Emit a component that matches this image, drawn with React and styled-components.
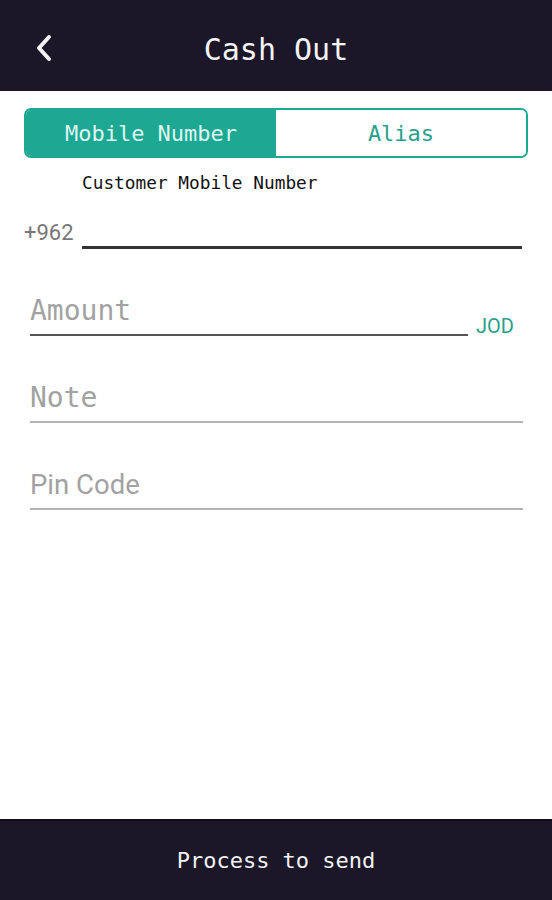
import { useState } from 'react';
import styled, { createGlobalStyle } from 'styled-components';

const GlobalStyle = createGlobalStyle`
  html, body {
    margin: 0;
    padding: 0;
    background: #fff;
  }
  * {
    box-sizing: border-box;
  }
`;

const mono = `"DejaVu Sans Mono", "Liberation Mono", monospace`;
const sans = `Roboto, "Noto Sans", sans-serif`;
const teal = '#1ca893';
const navy = '#1b1729';

const Screen = styled.div`
  display: flex;
  flex-direction: column;
  height: 900px;
  background: #fff;
`;

const Header = styled.header`
  position: relative;
  display: flex;
  align-items: center;
  justify-content: center;
  height: 91px;
  padding-top: 7px;
  background: ${navy};
`;

const BackButton = styled.button`
  position: absolute;
  left: 28px;
  top: 30px;
  display: flex;
  align-items: center;
  justify-content: center;
  width: 32px;
  height: 36px;
  padding: 0;
  border: 0;
  background: none;
  cursor: pointer;
`;

const Title = styled.h1`
  margin: 0;
  font-family: ${mono};
  font-size: 30px;
  font-weight: normal;
  color: #f4f4f4;
`;

const Content = styled.main`
  flex: 1;
  padding: 17px 24px 0 24px;
`;

const Toggle = styled.div`
  display: flex;
  height: 50px;
  border: 2px solid ${teal};
  border-radius: 7px;
  overflow: hidden;
`;

const ToggleOption = styled.button`
  flex: 1;
  border: 0;
  padding: 0;
  font-family: ${mono};
  font-size: 22px;
  background: ${(p) => (p.$active ? teal : '#fff')};
  color: ${(p) => (p.$active ? '#dff5f0' : '#27a08c')};
  cursor: pointer;
`;

const FieldLabel = styled.div`
  margin: 14px 0 0 58px;
  font-family: ${mono};
  font-size: 17.8px;
  color: #111;
`;

const PhoneRow = styled.div`
  display: flex;
  align-items: flex-end;
  margin-top: 24px;
  padding-right: 6px;
`;

const Prefix = styled.span`
  width: 58px;
  font-family: ${sans};
  font-size: 22px;
  line-height: 24px;
  color: #777;
  padding-bottom: 4px;
`;

const PhoneInput = styled.input`
  flex: 1;
  height: 32px;
  border: 0;
  border-bottom: 3px solid #333;
  outline: none;
  font-family: ${mono};
  font-size: 22px;
  background: transparent;
`;

const Field = styled.div`
  display: flex;
  align-items: flex-end;
  margin-top: ${(p) => p.$gap}px;
  padding: 0 ${(p) => (p.$suffix ? 14 : 5)}px 0 6px;
`;

const TextInput = styled.input`
  flex: 1;
  min-width: 0;
  height: 44px;
  padding: 0 0 6px 0;
  border: 0;
  border-bottom: 2px solid ${(p) => (p.$focused ? '#555' : '#b3b3b3')};
  outline: none;
  font-family: ${(p) => (p.$sans ? sans : mono)};
  font-size: ${(p) => (p.$sans ? 27.5 : 28)}px;
  background: transparent;
  color: #222;

  &::placeholder {
    color: #a2a2a2;
  }
`;

const Suffix = styled.span`
  margin-left: 8px;
  font-family: ${sans};
  font-size: 20px;
  line-height: 20px;
  color: #2a9f89;
`;

const Footer = styled.button`
  height: 81px;
  padding-top: 0;
  border: 0;
  border-top: 2px solid #0f0c1a;
  background: ${navy};
  color: #f2f2f2;
  font-family: ${mono};
  font-size: 22px;
  cursor: pointer;
`;

const App = () => {
  const [mode, setMode] = useState('mobile');

  return (
    <>
      <GlobalStyle />
      <Screen>
        <Header>
          <BackButton aria-label="Back">
            <svg width="20" height="28" viewBox="0 0 20 28" fill="none">
              <path
                d="M15 3 L5 14 L15 25"
                stroke="#f4f4f4"
                strokeWidth="4"
                strokeLinecap="round"
                strokeLinejoin="round"
              />
            </svg>
          </BackButton>
          <Title>Cash Out</Title>
        </Header>
        <Content>
          <Toggle>
            <ToggleOption $active={mode === 'mobile'} onClick={() => setMode('mobile')}>
              Mobile Number
            </ToggleOption>
            <ToggleOption $active={mode === 'alias'} onClick={() => setMode('alias')}>
              Alias
            </ToggleOption>
          </Toggle>
          <FieldLabel>Customer Mobile Number</FieldLabel>
          <PhoneRow>
            <Prefix>+962</Prefix>
            <PhoneInput type="tel" />
          </PhoneRow>
          <Field $gap={43} $suffix>
            <TextInput $focused placeholder="Amount" />
            <Suffix>JOD</Suffix>
          </Field>
          <Field $gap={43}>
            <TextInput placeholder="Note" />
          </Field>
          <Field $gap={43}>
            <TextInput $sans type="password" placeholder="Pin Code" />
          </Field>
        </Content>
        <Footer>Process to send</Footer>
      </Screen>
    </>
  );
};

export default App;
